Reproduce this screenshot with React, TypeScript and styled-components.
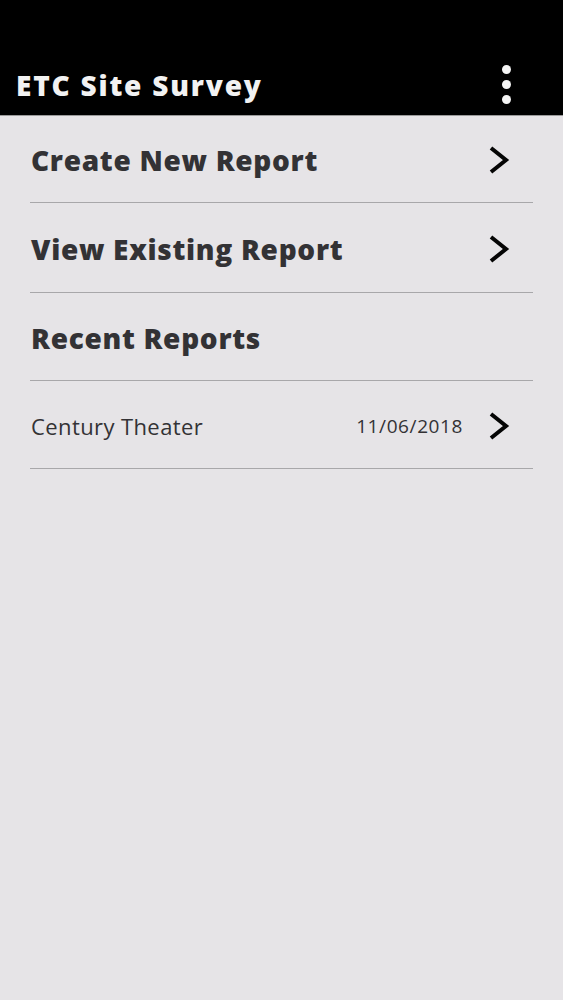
import React from "react";
import styled, { createGlobalStyle } from "styled-components";

const GlobalStyle = createGlobalStyle`
  html, body { margin: 0; padding: 0; }
  body {
    background: #e6e4e7;
    font-family: "Open Sans", "Noto Sans", sans-serif;
  }
`;

const Screen = styled.div`
  min-height: 1000px;
  background: #e6e4e7;
  display: flex;
  flex-direction: column;
`;

const AppBar = styled.header`
  height: 116px;
  background: #000;
  display: flex;
  align-items: flex-end;
  justify-content: space-between;
  padding: 0 52px 10px 16px;
  box-sizing: border-box;
  border-bottom: 1px solid #9a9a9a;
`;

const Title = styled.h1`
  margin: 0;
  color: #f2f2f2;
  font-size: 28px;
  font-weight: 800;
  line-height: 40px;
  letter-spacing: 1.8px;
`;

const MenuDots = styled.div`
  display: flex;
  flex-direction: column;
  gap: 6px;
  padding-bottom: 1px;
`;

const Dot = styled.span`
  width: 9px;
  height: 9px;
  border-radius: 50%;
  background: #f4f4f4;
`;

const List = styled.main`
  display: flex;
  flex-direction: column;
  padding: 0 30px 0 30px;
`;

const Row = styled.div<{ $h?: number }>`
  height: ${(p) => p.$h ?? 88}px;
  box-sizing: border-box;
  display: flex;
  align-items: center;
  border-bottom: 1.5px solid #a8a7aa;
  padding: 2px 22px 0 1px;
  gap: 24px;
`;

const Label = styled.span<{ $small?: boolean }>`
  flex: 1;
  color: #333235;
  font-size: ${(p) => (p.$small ? 22 : 28)}px;
  font-weight: ${(p) => (p.$small ? 400 : 800)};
  letter-spacing: ${(p) => (p.$small ? 0.4 : 0.7)}px;
`;

const DateText = styled.span`
  color: #333235;
  font-size: 19px;
  letter-spacing: 0.6px;
`;

const Chevron = () => (
  <svg width="24" height="30" viewBox="0 0 24 30" aria-hidden="true">
    <polyline
      points="4,3 19,15 4,27"
      fill="none"
      stroke="#050505"
      strokeWidth="4"
      strokeLinecap="butt"
      strokeLinejoin="miter"
    />
  </svg>
);

export default function App() {
  return (
    <>
      <GlobalStyle />
      <Screen>
        <AppBar>
          <Title>ETC Site Survey</Title>
          <MenuDots>
            <Dot />
            <Dot />
            <Dot />
          </MenuDots>
        </AppBar>
        <List>
          <Row $h={87}>
            <Label>Create New Report</Label>
            <Chevron />
          </Row>
          <Row $h={90}>
            <Label>View Existing Report</Label>
            <Chevron />
          </Row>
          <Row>
            <Label>Recent Reports</Label>
          </Row>
          <Row>
            <Label $small>Century Theater</Label>
            <DateText>11/06/2018</DateText>
            <Chevron />
          </Row>
        </List>
      </Screen>
    </>
  );
}
